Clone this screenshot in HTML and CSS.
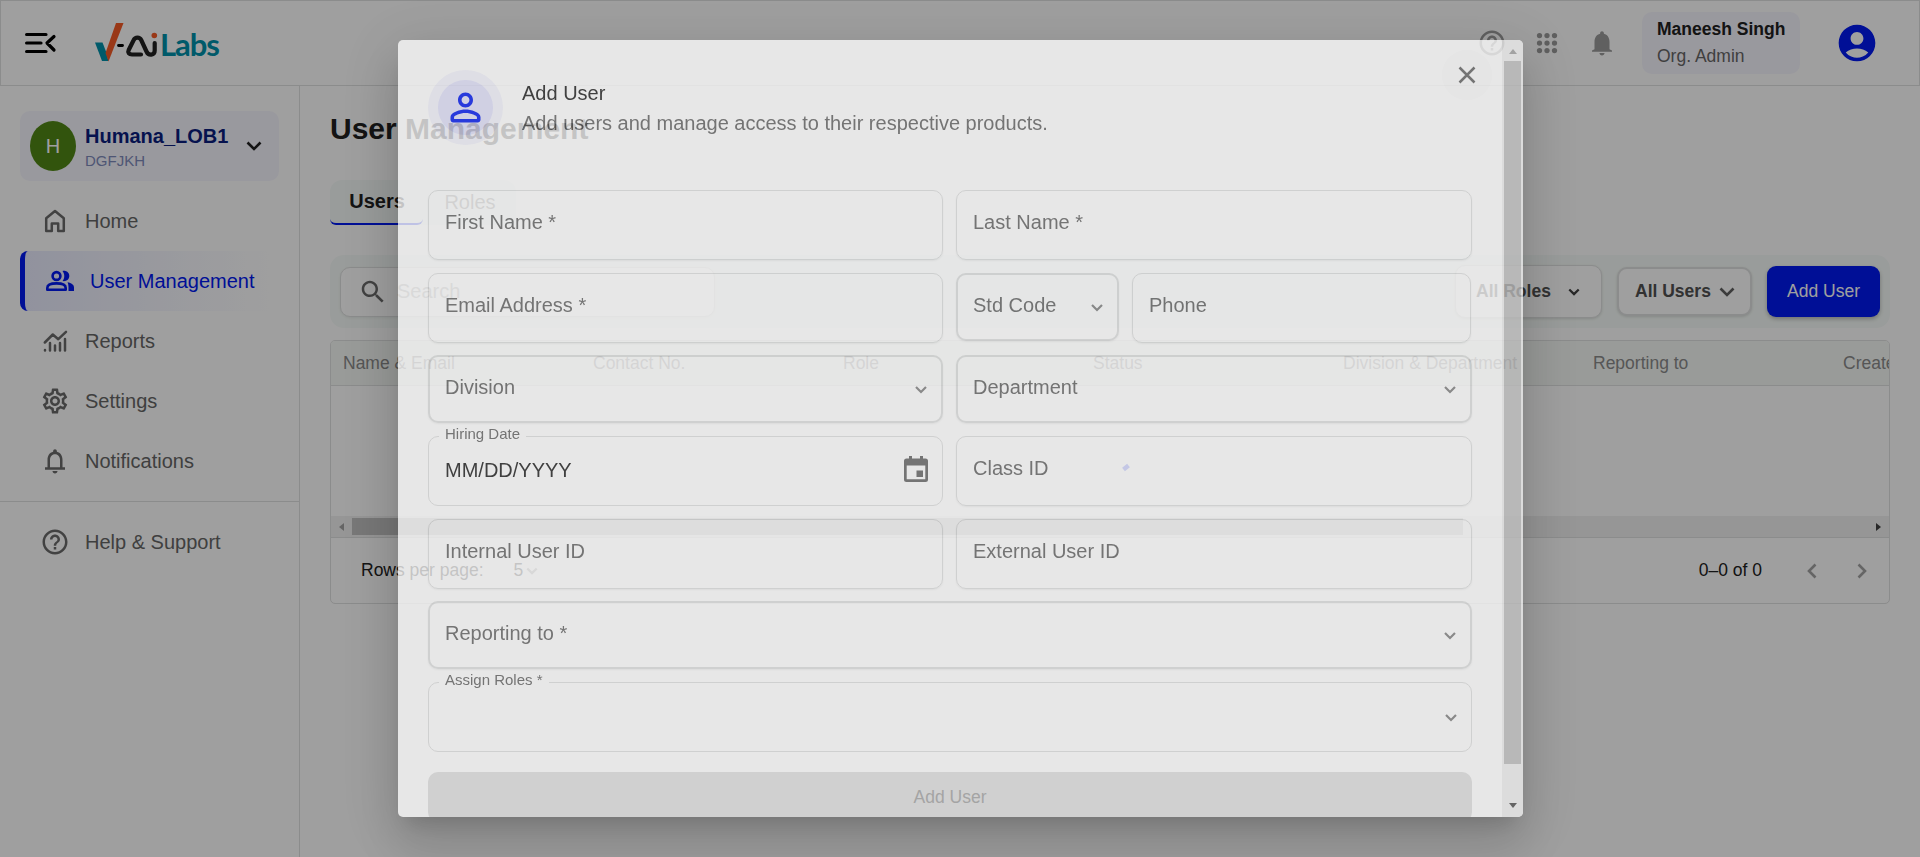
FILE: index.html
```html
<!DOCTYPE html>
<html lang="en">
<head>
<meta charset="utf-8">
<title>User Management</title>
<link rel="stylesheet" href="styles.css">
</head>
<body>
<div class="app">
  <header class="topbar">
    <svg class="menu-icon" viewBox="0 0 30 22" width="30" height="22"><path d="M1.600 2.500H21M1.600 11H16M1.600 19.500H21M29 4.500L22 11L29 18"/></svg>
    <div class="logo">
      <svg viewBox="0 0 64 40" width="64" height="40">
        <path fill="#0190aa" d="M0 19.500h7.500l3.500 9 2.500 9.500H7z"/>
        <path fill="#f65a26" d="M21 0h7.500L13.500 38.500 10.500 30z"/>
        <path class="dash" d="M23.500 22.500h4"/>
        <path class="ribbon" d="M46 31.500H37c-3 0-4.500-2-3.300-4.500l5-10c1.500-3.200 6-3.200 7.500 0l5.300 11.500c2 4.500 8.200 4 8.200-1V20"/>
        <circle cx="59.300" cy="12.500" r="2.800" fill="#f65a26"/>
      </svg>
      <span>Labs</span>
    </div>
    <div class="top-actions">
      <svg class="i-help" viewBox="0 0 24 24" width="30" height="30"><path d="M11 18h2v-2h-2v2zm1-16C6.480 2 2 6.480 2 12s4.480 10 10 10 10-4.480 10-10S17.520 2 12 2zm0 18c-4.410 0-8-3.590-8-8s3.590-8 8-8 8 3.590 8 8-3.590 8-8 8zm0-14c-2.210 0-4 1.790-4 4h2c0-1.100.9-2 2-2s2 .9 2 2c0 2-3 1.750-3 5h2c0-2.250 3-2.500 3-5 0-2.210-1.790-4-4-4z"/></svg>
      <svg viewBox="0 0 24 24" width="30" height="30"><g><circle cx="6" cy="6" r="2.100"/><circle cx="12" cy="6" r="2.100"/><circle cx="18" cy="6" r="2.100"/><circle cx="6" cy="12" r="2.100"/><circle cx="12" cy="12" r="2.100"/><circle cx="18" cy="12" r="2.100"/><circle cx="6" cy="18" r="2.100"/><circle cx="12" cy="18" r="2.100"/><circle cx="18" cy="18" r="2.100"/></g></svg>
      <svg viewBox="0 0 24 24" width="30" height="30"><path d="M12 22c1.100 0 2-.9 2-2h-4c0 1.100.9 2 2 2zm6-5v-6c0-3.070-1.630-5.640-4.500-6.320V4c0-.83-.67-1.500-1.500-1.500s-1.500.67-1.500 1.500v.68C7.640 5.360 6 7.920 6 11v6l-2 1v1h16v-1z"/></svg>
    </div>
    <div class="who"><b>Maneesh Singh</b><span>Org. Admin</span></div>
    <svg class="account" viewBox="0 0 24 24" width="44" height="44"><path d="M12 2C6.480 2 2 6.480 2 12s4.480 10 10 10 10-4.480 10-10S17.520 2 12 2zm0 4c1.930 0 3.500 1.570 3.500 3.500S13.930 13 12 13s-3.500-1.570-3.500-3.500S10.070 6 12 6zm0 14c-2.030 0-4.430-.82-6.140-2.880C7.550 15.800 9.680 15 12 15s4.450.8 6.140 2.120C16.430 19.180 14.030 20 12 20z"/></svg>
  </header>
  <div class="body">
    <nav class="sidebar">
      <div class="org">
        <span class="org-avatar">H</span>
        <div class="org-text"><b>Humana_LOB1</b><span>DGFJKH</span></div>
        <svg class="chev" viewBox="0 0 16 10" width="16" height="10"><path d="M1.500 1.500L8 8l6.500-6.500"/></svg>
      </div>
      <a class="nav"><svg class="line" viewBox="0 0 30 30" width="30" height="30"><path d="M6.200 12.300L15 5l8.800 7.300V25h-5.600v-7.500h-6.400V25H6.200z"/></svg>Home</a>
      <a class="nav active"><svg viewBox="0 0 30 30" width="30" height="30"><g class="s"><circle cx="11.500" cy="10" r="3.900"/><path d="M2.300 23.700v-1.700c0-3 4.200-4.600 9.200-4.600s9.200 1.600 9.200 4.600v1.700z"/></g><path class="f" d="M17.500 4.900c4-.6 6.800 1.700 6.800 5.100s-2.800 5.700-6.800 5.100c2.400-2.900 2.400-7.300 0-10.200zM22.500 16.300c4 .8 6.500 2.500 6.500 5.200V25h-5.500v-3.500c0-2.100-.3-3.800-1-5.200z"/></svg>User Management</a>
      <a class="nav"><svg class="line" viewBox="0 0 30 30" width="30" height="30"><path d="M4.800 16.500l8-8 5.500 4.700L26 5.800M5 24v.5M10 17v7.500M15 19.500v5M20 17v7.500M25 13v11.500"/></svg>Reports</a>
      <a class="nav"><svg viewBox="0 0 24 24" width="30" height="30"><path d="M19.430 12.980c.04-.32.07-.64.07-.98 0-.34-.03-.66-.07-.98l2.110-1.650c.19-.15.24-.42.12-.64l-2-3.460c-.09-.16-.26-.25-.44-.25-.06 0-.12.010-.17.030l-2.490 1c-.52-.4-1.080-.73-1.690-.98l-.38-2.650C14.460 2.180 14.250 2 14 2h-4c-.25 0-.46.18-.49.42l-.38 2.650c-.61.25-1.170.59-1.690.98l-2.490-1c-.06-.02-.12-.03-.18-.03-.17 0-.34.090-.43.25l-2 3.460c-.13.22-.07.49.12.64l2.110 1.650c-.04.32-.07.65-.07.98s.03.66.07.98l-2.110 1.650c-.19.15-.24.42-.12.64l2 3.460c.09.16.26.25.44.25.06 0 .12-.01.17-.03l2.490-1c.52.4 1.080.73 1.690.98l.38 2.650c.03.24.24.42.49.42h4c.25 0 .46-.18.49-.42l.38-2.650c.61-.25 1.170-.59 1.690-.98l2.490 1c.06.020.12.030.18.030.17 0 .34-.09.43-.25l2-3.460c.12-.22.070-.49-.12-.64l-2.110-1.650zm-1.980-1.710c.04.31.05.52.05.73 0 .21-.02.43-.05.73l-.14 1.130.89.7 1.080.84-.7 1.210-1.270-.51-1.040-.42-.9.68c-.43.32-.84.56-1.250.73l-1.060.43-.16 1.130-.2 1.350h-1.400l-.19-1.350-.16-1.130-1.060-.43c-.43-.18-.83-.41-1.230-.71l-.91-.7-1.060.43-1.270.51-.7-1.210 1.080-.84.89-.7-.14-1.130c-.03-.31-.05-.54-.05-.74s.02-.43.050-.73l.14-1.130-.89-.7-1.080-.84.7-1.210 1.270.51 1.040.42.9-.68c.43-.32.84-.56 1.250-.73l1.060-.43.16-1.130.2-1.350h1.390l.19 1.350.16 1.130 1.060.43c.43.18.83.41 1.230.71l.91.7 1.060-.43 1.270-.51.7 1.210-1.070.85-.89.7.14 1.130zM12 8c-2.210 0-4 1.790-4 4s1.790 4 4 4 4-1.790 4-4-1.790-4-4-4zm0 6c-1.100 0-2-.9-2-2s.9-2 2-2 2 .9 2 2-.9 2-2 2z"/></svg>Settings</a>
      <a class="nav"><svg viewBox="0 0 24 24" width="30" height="30"><path d="M12 22c1.100 0 2-.9 2-2h-4c0 1.100.9 2 2 2zm6-5v-6c0-3.070-1.630-5.640-4.500-6.320V4c0-.83-.67-1.500-1.500-1.500s-1.500.67-1.500 1.500v.68C7.640 5.360 6 7.920 6 11v6H4v2h16v-2h-2zm-2 0H8v-6c0-2.480 1.510-4.500 4-4.500s4 2.020 4 4.500v6z"/></svg>Notifications</a>
      <div class="divider"></div>
      <a class="nav help"><svg viewBox="0 0 24 24" width="30" height="30"><path d="M11 18h2v-2h-2v2zm1-16C6.480 2 2 6.480 2 12s4.480 10 10 10 10-4.480 10-10S17.520 2 12 2zm0 18c-4.410 0-8-3.590-8-8s3.590-8 8-8 8 3.590 8 8-3.590 8-8 8zm0-14c-2.210 0-4 1.790-4 4h2c0-1.100.9-2 2-2s2 .9 2 2c0 2-3 1.750-3 5h2c0-2.250 3-2.500 3-5 0-2.210-1.790-4-4-4z"/></svg>Help &amp; Support</a>
    </nav>
    <main class="main">
      <h1>User Management</h1>
      <div class="tabs"><span class="tab on">Users</span><span class="tab">Roles</span></div>
      <div class="toolbar">
        <div class="search"><svg viewBox="0 0 24 24" width="30" height="30"><path d="M15.500 14h-.79l-.28-.27C15.410 12.590 16 11.110 16 9.500 16 5.910 13.090 3 9.500 3S3 5.910 3 9.500 5.910 16 9.500 16c1.610 0 3.090-.59 4.230-1.570l.27.28v.79l5 4.990L20.490 19l-4.990-5zm-6 0C7.010 14 5 11.990 5 9.500S7.010 5 9.500 5 14 7.010 14 9.500 11.990 14 9.500 14z"/></svg><span>Search</span></div>
        <div class="select roles"><span>All Roles</span><svg class="chev" viewBox="0 0 14 9" width="12" height="8"><path d="M1.500 1.500L7 7l5.500-5.500"/></svg></div>
        <div class="select users"><span>All Users</span><svg class="chev" viewBox="0 0 16 10" width="16" height="10"><path d="M1.500 1.500L8 8l6.500-6.500"/></svg></div>
        <div class="add">Add User</div>
      </div>
      <section class="table">
        <div class="thead"><span>Name &amp; Email</span><span>Contact No.</span><span>Role</span><span>Status</span><span>Division &amp; Department</span><span>Reporting to</span><span>Created</span></div>
        <div class="tbody"><svg width="12" height="12" viewBox="0 0 12 12"><path d="M3.500 8.500l5-4"/></svg></div>
        <div class="hscroll"><i class="tri left"></i><div class="hthumb"></div><i class="tri right"></i></div>
        <div class="tfoot">
          <span>Rows per page:</span><span class="five">5</span>
          <svg class="chev pale" viewBox="0 0 14 9" width="12" height="8"><path d="M1.500 1.500L7 7l5.500-5.500"/></svg>
          <span class="count">0–0 of 0</span>
          <svg class="chev pale" viewBox="0 0 10 16" width="10" height="16"><path d="M8.500 1.500L2 8l6.500 6.500"/></svg>
          <svg class="chev pale next" viewBox="0 0 10 16" width="10" height="16"><path d="M1.500 1.500L8 8l-6.500 6.500"/></svg>
        </div>
      </section>
    </main>
  </div>
</div>

<div class="backdrop"></div>
<div class="modal-root">
  <div class="dialog">
    <div class="content">
      <div class="dialog-head">
        <div class="ring"><div class="disc"><svg viewBox="0 0 24 24" width="45" height="45"><path d="M12 5.900c1.160 0 2.100.94 2.100 2.100s-.94 2.100-2.100 2.100S9.900 9.160 9.900 8s.94-2.100 2.100-2.100m0 9c2.970 0 6.100 1.460 6.100 2.100v1.100H5.900V17c0-.64 3.130-2.100 6.100-2.100M12 4C9.790 4 8 5.790 8 8s1.790 4 4 4 4-1.790 4-4-1.790-4-4-4zm0 9c-2.670 0-8 1.340-8 4v1.500c0 .83.67 1.500 1.500 1.500h13c.83 0 1.500-.67 1.500-1.500V17c0-2.660-5.330-4-8-4z"/></svg></div></div>
        <div class="titles"><div class="t1">Add User</div><div class="t2">Add users and manage access to their respective products.</div></div>
        <div class="close"><svg viewBox="0 0 18 18" width="18" height="18"><path d="M1.500 1.500l15 15M16.500 1.500l-15 15"/></svg></div>
      </div>
      <div class="form">
        <div class="field">First Name *</div>
        <div class="field">Last Name *</div>
        <div class="field">Email Address *</div>
        <div class="pair">
          <div class="field sel">Std Code<svg class="arr" viewBox="0 0 12 8" width="12" height="8"><path d="M1 1l5 5 5-5"/></svg></div>
          <div class="field">Phone</div>
        </div>
        <div class="field sel">Division<svg class="arr" viewBox="0 0 12 8" width="12" height="8"><path d="M1 1l5 5 5-5"/></svg></div>
        <div class="field sel">Department<svg class="arr" viewBox="0 0 12 8" width="12" height="8"><path d="M1 1l5 5 5-5"/></svg></div>
        <fieldset class="notched"><legend>Hiring Date</legend><div class="inner"><span>MM/DD/YYYY</span><svg viewBox="0 0 24 26" width="24" height="26"><path d="M5 0h3v2.500h8V0h3v2.500h2.500A2.500 2.500 0 0 1 24 5v18.500a2.500 2.500 0 0 1-2.500 2.500h-19A2.500 2.500 0 0 1 0 23.500V5a2.500 2.500 0 0 1 2.500-2.500H5zM2.700 9.500v13.800h18.600V9.500zM12.500 14.500H19V21h-6.500z" fill-rule="evenodd"/></svg></div></fieldset>
        <div class="field">Class ID</div>
        <div class="field low">Internal User ID</div>
        <div class="field low">External User ID</div>
        <div class="field sel wide">Reporting to *<svg class="arr" viewBox="0 0 12 8" width="12" height="8"><path d="M1 1l5 5 5-5"/></svg></div>
        <fieldset class="notched wide"><legend>Assign Roles *</legend><div class="inner"><span></span><svg class="arr" viewBox="0 0 12 8" width="12" height="8"><path d="M1 1l5 5 5-5"/></svg></div></fieldset>
        <div class="submit wide">Add User</div>
      </div>
    </div>
    <div class="vscroll"><i class="tri up"></i><div class="vthumb"></div><i class="tri down"></i></div>
  </div>
</div>
</body>
</html>
```
FILE: styles.css
```css
* { box-sizing: border-box; }
body { margin: 0; width: 1920px; height: 857px; overflow: hidden; background: #fff; font-family: "Liberation Sans", Arial, sans-serif; font-size: 20px; color: #666; }
svg { display: block; flex: none; overflow: visible; }
.app { height: 857px; display: flex; flex-direction: column; white-space: nowrap; }

/* Top bar */
.topbar { height: 86px; flex: none; border: 1px solid #dfe0e0; display: flex; align-items: center; padding-left: 24px; }
.menu-icon path { fill: none; stroke: #000; stroke-width: 3.200; stroke-linecap: round; stroke-linejoin: round; }
.logo { display: flex; align-items: center; margin-left: 40px; width: 140px; }
.logo .dash { stroke: #000; stroke-width: 2.800; stroke-linecap: round; }
.logo .ribbon { fill: none; stroke: #202020; stroke-width: 4.200; stroke-linecap: round; stroke-linejoin: round; }
.logo span { font: bold 31px/40px Lato, sans-serif; color: #0190aa; margin: 2px 0 0 1px; letter-spacing: -1.100px; }
.top-actions { margin-left: auto; display: flex; gap: 25px; fill: #9a9a9a; }
.who { width: 158px; height: 62px; margin-left: 25px; margin-right: 35px; background: #f6f5fe; border-radius: 10px; padding: 4px 0 0 15px; font-size: 17.500px; line-height: 27px; display: flex; flex-direction: column; }
.who b { color: #202020; }
.account { fill: #0018f0; margin-right: 40px; }

/* Sidebar */
.body { flex: 1; display: flex; }
.sidebar { width: 300px; border-right: 1px solid #dfe0e0; padding-top: 25px; }
.org { margin: 0 20px 10px; width: 259px; height: 70px; border-radius: 10px; background: #f6f5fe; display: flex; align-items: center; padding: 0 17px 0 10px; }
.org-avatar { width: 46px; height: 50px; flex: none; border-radius: 50%; background: #508716; color: #fff; display: flex; align-items: center; justify-content: center; }
.org-text { margin-left: 9px; margin-top: 2px; flex: 1; display: flex; flex-direction: column; }
.org-text b { color: #0a1d7e; line-height: 26px; }
.org-text span { font-size: 15px; line-height: 23px; color: #7e8abb; }
.chev path { fill: none; stroke: #202020; stroke-width: 2.600; }
.chev.pale path { stroke: #a3a3a3; }
.nav { display: flex; align-items: center; height: 60px; padding-left: 20px; gap: 15px; margin-left: 20px; width: 260px; fill: #6b6b6b; }
.nav .line path { fill: none; stroke: #6b6b6b; stroke-width: 2.500; stroke-linejoin: round; stroke-linecap: round; }
.nav.active { border-left: 5px solid #0018f0; border-radius: 8px; color: #0018f0; background: linear-gradient(90deg, #e9ebfd, #fff 96%); fill: #0018f0; }
.nav .s { fill: none; stroke: #0018f0; stroke-width: 2.600; stroke-linejoin: round; }
.divider { height: 1px; background: #dfe0e0; margin-top: 10px; }
.help { margin-top: 10px; }

/* Page */
.main { flex: 1; padding: 23px 30px 0; min-width: 0; }
h1 { margin: 0; font-size: 30px; line-height: 40px; color: #202020; }
.tabs { display: flex; width: 186px; height: 45px; margin-top: 31px; background: #f6fbf8; border-radius: 12px 12px 0 0; }
.tab { width: 93px; display: flex; align-items: center; justify-content: center; padding: 0 0 0 1px; color: #777; }
.tab.on { font-weight: bold; color: #202020; border-bottom: 2px solid #0018f0; border-radius: 0 0 6px 6px; }
.toolbar { margin-top: 30px; height: 73px; background: #f6fbf8; border-radius: 14px; padding: 0 10px; display: flex; align-items: center; font-size: 17.500px; }
.search { width: 375px; height: 50px; border: 1px solid #dfe0e0; border-radius: 10px; background: #fff; display: flex; align-items: center; padding-left: 17px; gap: 9px; font-size: 20px; color: #a5a5a5; fill: #6b6b6b; box-shadow: 0 1px 3px #0001; }
.select { background: #fff; border: 1px solid #dfe0e0; border-radius: 10px; display: flex; align-items: center; font-weight: bold; color: #505050; box-shadow: 0 1px 3px #0002; }
.roles { width: 147px; height: 53px; margin-left: auto; padding-left: 20px; gap: 17px; }
.roles path { stroke: #404040; }
.users { width: 135px; height: 49px; margin-left: 15px; border-width: 2px; padding-left: 16px; gap: 8px; }
.users path { stroke: #606060; }
.add { width: 113px; height: 51px; margin-left: 15px; border-radius: 9px; background: #0018f0; color: #fff; display: flex; align-items: center; justify-content: center; box-shadow: 0 2px 4px #0004; }
.table { margin-top: 12px; height: 264px; border: 1px solid #dfe0e0; border-radius: 5px; overflow: hidden; font-size: 17.500px; }
.thead { height: 45px; background: #f5f9f6; border-bottom: 1px solid #dfe0e0; display: grid; grid-template-columns: repeat(7, 250px); align-items: center; padding-left: 12px; color: #8a8a8a; }
.tbody { height: 130px; display: flex; align-items: flex-end; justify-content: center; padding: 0 0 43px 31px; }
.tbody path { stroke: #2038f0; stroke-width: 4.500; }
.hscroll { height: 22px; background: #f1f1f1; border-bottom: 1px solid #dfe0e0; display: flex; align-items: center; padding: 0 8px; }
.hthumb { height: 17px; width: 1111px; background: #c1c1c1; margin-left: 8px; }
.tri { width: 0; height: 0; border: 4.500px solid transparent; }
.left { border-right: 5px solid #a3a3a3; border-left: 0; }
.right { border-left: 5px solid #404040; border-right: 0; margin-left: auto; }
.tfoot { height: 65px; display: flex; align-items: center; padding: 0 22px 0 30px; color: #202020; }
.five { margin-left: 30px; margin-right: 3px; }
.count { margin-left: auto; margin-right: 45px; }
.next { margin-left: 40px; }

/* Overlay caught mid-fade */
.backdrop { position: absolute; inset: 0; background: #000; opacity: .375; }
.modal-root { position: absolute; inset: 0; display: flex; justify-content: center; align-items: flex-start; padding-top: 40px; opacity: .75; }
.dialog { width: 1125px; height: 777px; margin-left: 1px; background: #fff; border-radius: 5px; overflow: hidden; display: flex; box-shadow: 0 14px 19px -9px rgba(0,0,0,.2), 0 30px 48px 4px rgba(0,0,0,.14), 0 11px 58px 10px rgba(0,0,0,.12); }
.content { flex: 1; padding: 10px 30px 0; white-space: nowrap; }
.dialog-head { display: flex; height: 140px; }
.ring { width: 75px; height: 75px; margin-top: 20px; border-radius: 50%; background: #f3f3fd; display: flex; align-items: center; justify-content: center; }
.disc { width: 55px; height: 55px; border-radius: 50%; background: #e0e0fa; display: flex; align-items: center; justify-content: center; fill: #0018f0; }
.titles { margin: 28px 0 0 19px; flex: 1; line-height: 30px; }
.t1 { color: #202020; }
.close { width: 50px; height: 50px; margin-right: -20px; border-radius: 50%; background: #fcfcfc; display: flex; align-items: center; justify-content: center; }
.close path { stroke: #666; stroke-width: 2.500; }
.form { display: grid; grid-template-columns: 515px 516px; grid-template-rows: 71px 70px 69px 71px 70px 69px 78px 70px; gap: 12px 13px; align-items: start; }
.field { height: 70px; border: 1px solid #dfe0e0; border-radius: 10px; padding: 0 16px; line-height: 63px; box-shadow: 0 1px 2px #0001; display: flex; justify-content: space-between; }
.low { line-height: 62px; }
.sel { height: 68px; border-width: 2px; padding: 0 14px 0 15px; line-height: 61px; }
.arr { margin-top: 29px; }
.arr path { fill: none; stroke: #828282; stroke-width: 2.200; }
.pair { display: grid; grid-template-columns: 163px 339px; gap: 13px; align-items: start; }
.wide { grid-column: 1 / 3; }
.notched { margin: -9px 0 0; height: 79px; min-width: 0; border: 1px solid #dfe0e0; border-radius: 10px; padding: 0 14px 0 10px; }
.notched legend { height: 18px; padding: 0 6px; font-size: 15px; line-height: 14px; }
.inner { display: flex; justify-content: space-between; margin-top: 11px; padding-left: 6px; line-height: 28px; color: #202020; fill: #666; }
.inner .arr { margin-top: 12px; }
.submit { height: 50px; border-radius: 10px; background: #e0e0e0; color: #a6a6a6; font-size: 17.500px; display: flex; align-items: center; justify-content: center; }
.vscroll { width: 21px; background: #f1f1f1; display: flex; flex-direction: column; align-items: center; padding: 9px 0 9px; }
.vthumb { width: 17px; height: 703px; background: #c1c1c1; margin-top: 7px; }
.up { border-bottom: 5px solid #a3a3a3; border-top: 0; }
.down { border-top: 5px solid #505050; border-bottom: 0; margin-top: auto; }
```
